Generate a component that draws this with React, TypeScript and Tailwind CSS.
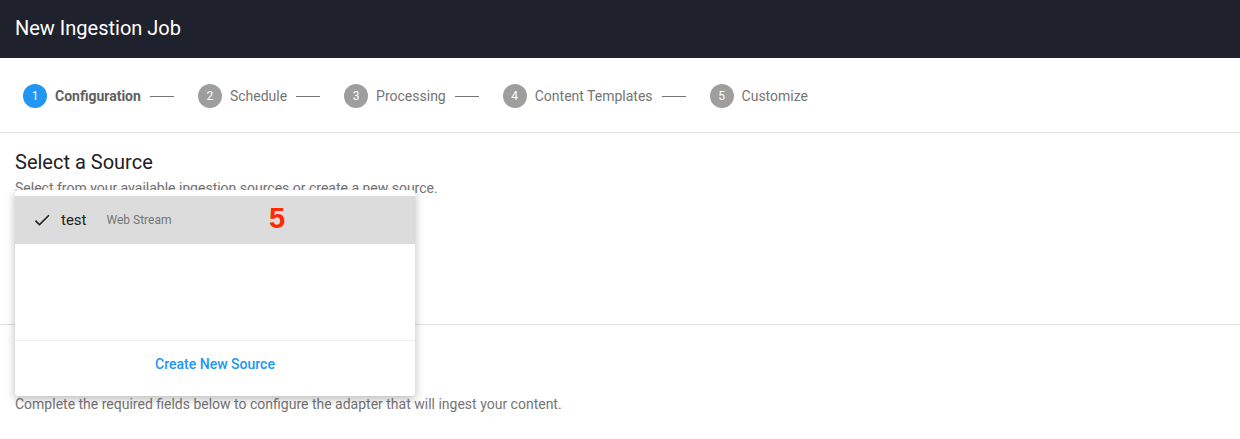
import React from "react";

const steps = [
  { n: 1, label: "Configuration", active: true },
  { n: 2, label: "Schedule" },
  { n: 3, label: "Processing" },
  { n: 4, label: "Content Templates" },
  { n: 5, label: "Customize" },
];

export default function App() {
  return (
    <div className="relative w-[1240px] h-[439px] overflow-hidden bg-white font-['Roboto',sans-serif]">
      <header className="h-[58px] bg-[#1f222c] flex items-center px-[15px] pb-[3px]">
        <h1 className="text-white text-[20px] font-normal leading-none">New Ingestion Job</h1>
      </header>

      <nav className="h-[75px] border-b border-[#e0e0e0] flex items-center pl-[23px] pt-[2px]">
        {steps.map((s, i) => (
          <div key={s.n} className="flex items-center">
            <div
              className={
                s.active
                  ? "w-6 h-6 rounded-full bg-[#2196f3] text-white text-[12px] flex items-center justify-center"
                  : "w-6 h-6 rounded-full bg-[#9e9e9e] text-white text-[12px] flex items-center justify-center"
              }
            >
              {s.n}
            </div>
            <span
              className={
                s.active
                  ? "ml-2 text-[14px] font-bold text-[#616161]"
                  : "ml-2 text-[14px] text-[#757575]"
              }
            >
              {s.label}
            </span>
            {i < steps.length - 1 && (
              <div className="ml-[9px] mr-[24px] w-6 h-px bg-[#757575]" />
            )}
          </div>
        ))}
      </nav>

      <section className="h-[192px] border-b border-[#e0e0e0] px-[15px] pt-[17px]">
        <h2 className="text-[20px] leading-6 text-[#212121]">Select a Source</h2>
        <p className="mt-[5px] text-[14px] leading-[18px] text-[#757575]">
          Select from your available ingestion sources or create a new source.
        </p>
      </section>

      <section className="px-[15px] pt-[16px]">
        <h2 className="text-[20px] leading-6 text-[#212121]">Configure Adapter</h2>
        <p className="mt-[30px] text-[14px] leading-[18px] text-[#757575]">
          Complete the required fields below to configure the adapter that will ingest your content.
        </p>
      </section>

      <div className="absolute left-[15px] top-[190px] w-[400px] h-[206px] bg-white rounded-[3px] shadow-[0_3px_10px_rgba(0,0,0,0.28)] flex flex-col overflow-hidden pt-[6px]">
        <div className="h-12 bg-[#dcdcdc] flex items-center pl-[17px]">
          <svg viewBox="0 0 24 24" className="w-[20px] h-[20px] fill-[#212121]">
            <path d="M9 16.17L4.83 12l-1.42 1.41L9 19 21 7l-1.41-1.41z" />
          </svg>
          <span className="ml-[9px] text-[15px] text-[#212121]">test</span>
          <span className="ml-[20px] text-[12px] text-[#757575]">Web Stream</span>
        </div>
        <div className="flex-1 border-b border-[#eeeeee]" />
        <div className="h-[55px] flex items-start justify-center pt-[14px]">
          <span className="text-[14px] leading-[18px] font-medium text-[#2196f3]">Create New Source</span>
        </div>
      </div>

      <div className="absolute left-[269px] top-[204px] text-[29px] font-bold leading-none text-[#ff2a00] font-['Liberation_Sans',sans-serif]">
        5
      </div>
    </div>
  );
}
